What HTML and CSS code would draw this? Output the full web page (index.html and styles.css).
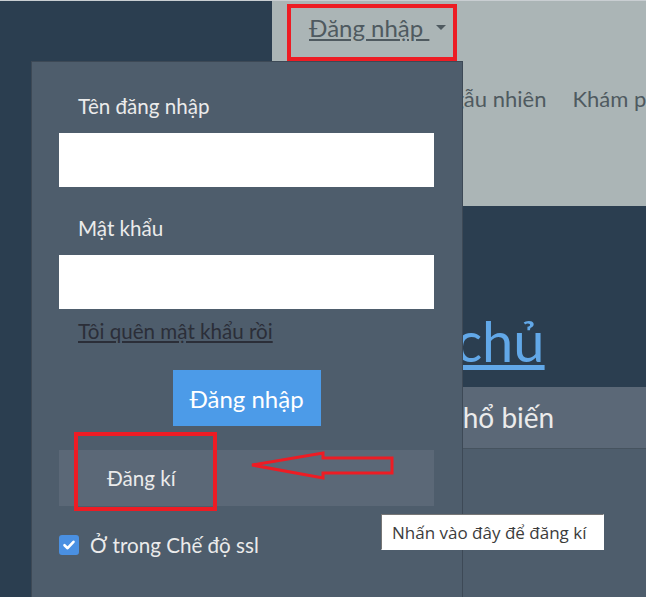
FILE: index.html
```html
<!DOCTYPE html>
<html lang="vi">
<head>
    <meta charset="UTF-8">
    <meta name="viewport" content="width=device-width, initial-scale=1.0">
    <title>Trang chủ</title>
    <link rel="stylesheet" href="styles.css">
</head>
<body>
    <div class="page">
        <aside class="side"></aside>

        <div class="main">
            <nav class="navbar">
                <a class="login-toggle" href="#"><span class="toggle-text">Đăng nhập&nbsp;</span><span class="caret"></span></a>
                <ul class="nav-links">
                    <li><a href="#">Ngẫu nhiên</a></li>
                    <li><a href="#">Khám phá</a></li>
                </ul>
            </nav>

            <div class="hero">
                <h1><a href="#">Trang chủ</a></h1>
            </div>

            <div class="card">
                <div class="card-header">Phổ biến</div>
                <div class="card-body"></div>
            </div>
        </div>
    </div>

    <!-- login dropdown, open -->
    <div class="dropdown">
        <form class="login-form">
            <label class="field-label" for="username">Tên đăng nhập</label>
            <input class="field-input" type="text" id="username">

            <label class="field-label" for="password">Mật khẩu</label>
            <input class="field-input" type="password" id="password">

            <a class="forgot-link" href="#">Tôi quên mật khẩu rồi</a>

            <div class="submit-row">
                <button class="login-btn" type="button">Đăng nhập</button>
            </div>

            <a class="register-item" href="#">Đăng kí</a>

            <label class="ssl-row">
                <span class="check-box">
                    <svg width="14" height="14" viewBox="0 0 14 14"><path d="M2.5 7.2 L5.6 10.2 L11.5 3.8" fill="none" stroke="#ffffff" stroke-width="2.6" stroke-linecap="round" stroke-linejoin="round"/></svg>
                </span>
                <span>Ở trong Chế độ ssl</span>
            </label>
        </form>
    </div>

    <!-- annotations -->
    <div class="mark mark-toggle"></div>
    <div class="mark mark-register"></div>
    <svg class="arrow" width="148" height="34" viewBox="0 0 148 34">
        <polygon points="4,15 75,3 75,8 144,8 144,23 75,23 75,28" fill="none" stroke="#ed1c24" stroke-width="3" stroke-linejoin="miter"/>
    </svg>

    <div class="tooltip">Nhấn vào đây để đăng kí</div>
</body>
</html>
```

FILE: styles.css
```css
body {
    margin: 0;
    background-color: #2b3e50;
    color: #ebebeb;
    font-family: 'Lato', 'Noto Sans', sans-serif;
    position: relative;
    width: 646px;
    height: 597px;
    overflow: hidden;
}

.page {
    display: grid;
    grid-template-columns: 272px 1fr;
    min-height: 597px;
    border-top: 1px solid #c9ced2;
}

.main {
    display: flex;
    flex-direction: column;
    min-width: 0;
    overflow: hidden;
}

/* navbar */
.navbar {
    background-color: #abb5b6;
    height: 205px;
    box-sizing: border-box;
    padding: 10px 0 0 37px;
}

.login-toggle {
    display: inline-flex;
    align-items: center;
    font-size: 24px;
    line-height: 33px;
    color: #4f5a60;
    text-decoration: none;
}

.toggle-text {
    text-decoration: underline;
}

.caret {
    width: 0;
    height: 0;
    margin-left: 7px;
    border-left: 5px solid transparent;
    border-right: 5px solid transparent;
    border-top: 5px solid #4f5a60;
}

.nav-links {
    display: flex;
    gap: 26px;
    list-style: none;
    margin: 38px 0 0 127px;
    padding: 0;
    white-space: nowrap;
}

.nav-links a {
    font-size: 22px;
    line-height: 33px;
    color: #4f5a60;
    text-decoration: none;
}

/* hero */
.hero {
    height: 181px;
    box-sizing: border-box;
    padding: 101px 0 0 34px;
}

.hero h1 {
    margin: 0;
    font-size: 56px;
    font-weight: 400;
    line-height: 67px;
    white-space: nowrap;
}

.hero h1 a {
    color: #62a8e8;
    text-decoration: underline;
}

/* card */
.card {
    flex: 1;
    display: flex;
    flex-direction: column;
    background-color: #4e5d6c;
}

.card-header {
    height: 61px;
    line-height: 61px;
    padding-left: 174px;
    font-size: 28px;
    background-color: #5b6877;
    border-bottom: 1px solid #46535f;
    white-space: nowrap;
}

/* dropdown */
.dropdown {
    position: absolute;
    left: 31px;
    top: 61px;
    width: 432px;
    height: 560px;
    box-sizing: border-box;
    padding: 29px 28px 0 27px;
    background-color: #4e5d6c;
    border: 1px solid #3d4956;
}

.login-form {
    display: flex;
    flex-direction: column;
}

.field-label {
    font-size: 20.6px;
    line-height: 30px;
    padding-left: 19px;
    margin-bottom: 12px;
    color: #ebebeb;
}

.field-input {
    height: 54px;
    border: none;
    padding: 0 12px;
    margin: 0 0 26px;
    background-color: #ffffff;
    font-family: inherit;
    font-size: 18px;
}

#password {
    margin-bottom: 7px;
}

.forgot-link {
    align-self: flex-start;
    margin-left: 19px;
    font-size: 20.6px;
    line-height: 30px;
    color: #2b2e38;
    text-decoration: underline;
}

.submit-row {
    display: flex;
    justify-content: center;
    margin-top: 24px;
}

.login-btn {
    width: 148px;
    height: 56px;
    border: none;
    background-color: #4c9be8;
    color: #ffffff;
    font-family: inherit;
    font-size: 24px;
    cursor: pointer;
}

.register-item {
    display: flex;
    align-items: center;
    height: 56px;
    margin-top: 24px;
    padding-left: 48px;
    background-color: #5b6877;
    color: #ebebeb;
    font-size: 20.6px;
    text-decoration: none;
}

.ssl-row {
    display: flex;
    align-items: center;
    gap: 11px;
    margin-top: 29px;
    font-size: 20.6px;
    line-height: 20px;
    color: #ebebeb;
}

.check-box {
    display: flex;
    align-items: center;
    justify-content: center;
    width: 20px;
    height: 20px;
    border-radius: 3px;
    background-color: #4a90e2;
}

/* annotations drawn over the screenshot */
.mark {
    position: absolute;
    box-sizing: border-box;
    border: 4px solid #ed1c24;
}

.mark-toggle {
    left: 287px;
    top: 4px;
    width: 170px;
    height: 57px;
}

.mark-register {
    left: 74px;
    top: 432px;
    width: 143px;
    height: 79px;
}

.arrow {
    position: absolute;
    left: 248px;
    top: 450px;
}

.tooltip {
    position: absolute;
    left: 381px;
    top: 514px;
    width: 223px;
    height: 36px;
    box-sizing: border-box;
    display: flex;
    align-items: center;
    padding: 0 10px;
    background-color: #ffffff;
    border: 1px solid #767676;
    border-right-color: #ffffff;
    border-bottom-color: #ffffff;
    color: #3c3c3c;
    font-family: 'Open Sans', sans-serif;
    font-size: 17px;
    white-space: nowrap;
}
```
